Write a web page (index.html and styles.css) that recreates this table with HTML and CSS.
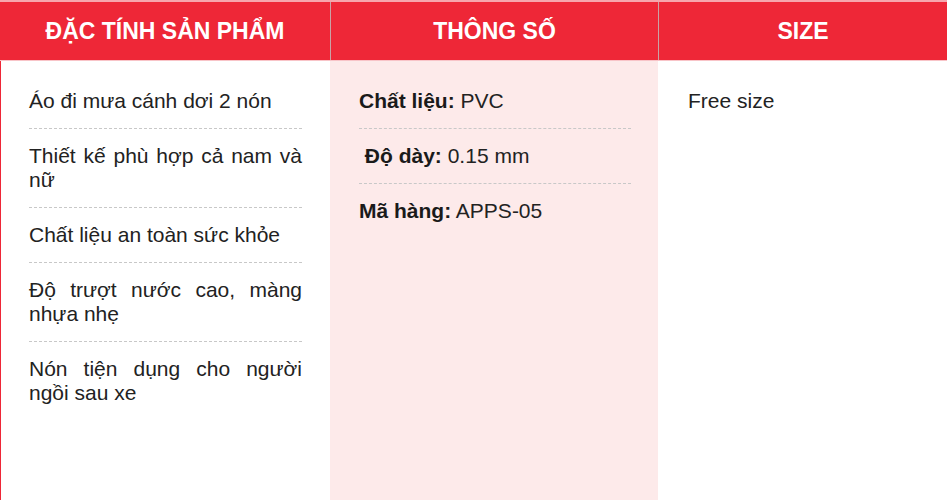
FILE: index.html
```html
<!DOCTYPE html>
<html lang="vi">
<head>
<meta charset="utf-8">
<link rel="stylesheet" href="styles.css">
</head>
<body>
<div class="spec">
  <div class="head">
    <div class="hcell c1">ĐẶC TÍNH SẢN PHẨM</div>
    <div class="hcell c2">THÔNG SỐ</div>
    <div class="hcell c3">SIZE</div>
  </div>
  <div class="body">
    <div class="col c1">
      <ul class="list">
        <li>Áo đi mưa cánh dơi 2 nón</li>
        <li>Thiết kế phù hợp cả nam và nữ</li>
        <li>Chất liệu an toàn sức khỏe</li>
        <li>Độ trượt nước cao, màng nhựa nhẹ</li>
        <li class="last">Nón tiện dụng cho người ngồi sau xe</li>
      </ul>
    </div>
    <div class="col c2 pink">
      <ul class="list">
        <li><b>Chất liệu:</b> PVC</li>
        <li>&nbsp;<b>Độ dày:</b> 0.15 mm</li>
        <li class="last"><b>Mã hàng:</b> APPS-05</li>
      </ul>
    </div>
    <div class="col c3">
      <ul class="list">
        <li class="last">Free size</li>
      </ul>
    </div>
  </div>
</div>
</body>
</html>
```
FILE: styles.css
```css
html, body {
  margin: 0;
  padding: 0;
  background: #fff;
}
body {
  font-family: "Liberation Sans", Arial, sans-serif;
  color: #222;
}
.spec {
  width: 947px;
  height: 500px;
  display: flex;
  flex-direction: column;
  overflow: hidden;
}
.head {
  display: grid;
  grid-template-columns: 330px 328px 289px;
  height: 58px;
  background: #ee2737;
  border-top: 2px solid #f7a6ad;
  border-bottom: 1px solid #f8c4c8;
}
.hcell {
  display: flex;
  align-items: center;
  justify-content: center;
  color: #fff;
  font-weight: bold;
  font-size: 23px;
}
.hcell.c2, .hcell.c3 {
  border-left: 1px solid #c9a2a5;
}
.body {
  flex: 1;
  display: grid;
  grid-template-columns: 330px 328px 289px;
}
.col {
  padding: 13px 28px 0 29px;
}
.col.c1 {
  border-left: 1px solid #ee2737;
  padding-left: 28px;
}
.col.c2 {
  padding-left: 29px;
  padding-right: 27px;
}
.col.c3 {
  padding-left: 30px;
}
.pink {
  background: #fdeaea;
}
.list {
  list-style: none;
  margin: 0;
  padding: 0;
}
.list li {
  font-size: 21px;
  line-height: 24px;
  padding: 15px 0 15px;
  border-bottom: 1px dashed #c8c8c8;
  text-align: justify;
}
.list li.last {
  border-bottom: none;
}
.list b {
  font-weight: bold;
  color: #1a1a1a;
}
```
